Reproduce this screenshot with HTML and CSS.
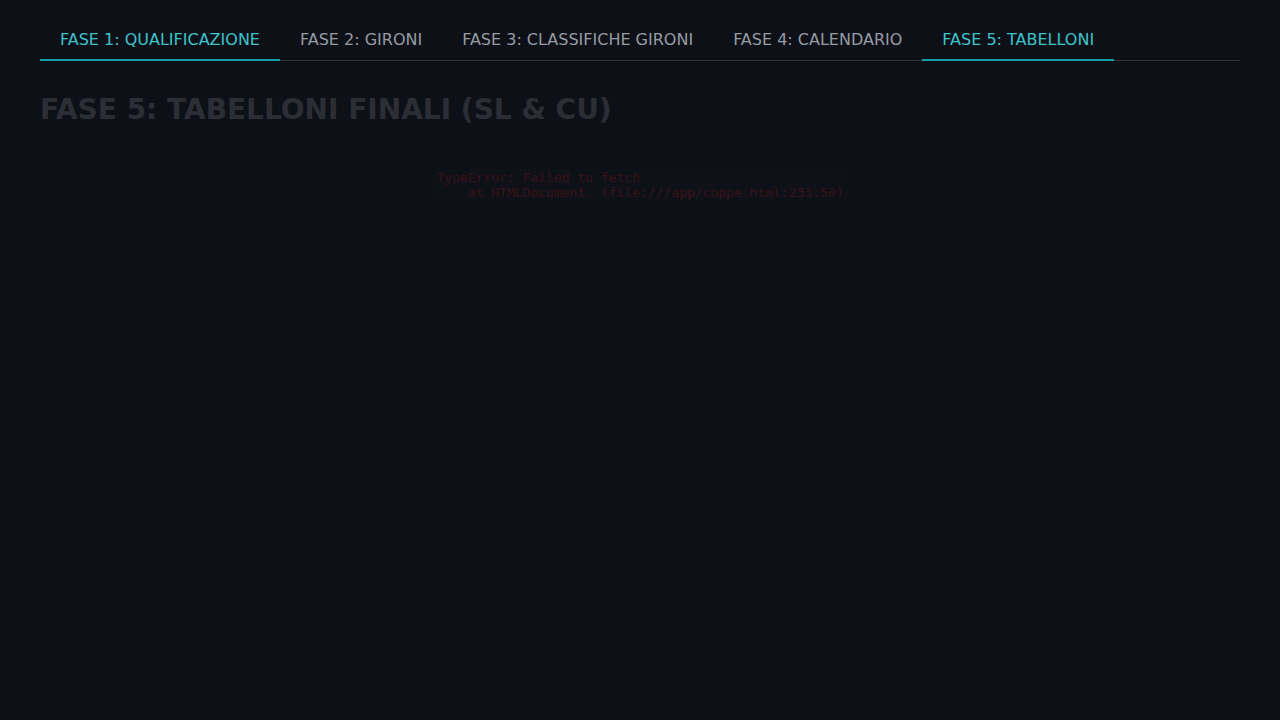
FILE: index.html
```html
<!DOCTYPE html>
<html lang="it">
<head>
<meta charset="utf-8">
<title>Coppe</title>
<link rel="stylesheet" href="styles.css">
</head>
<body>
<nav class="tabs">
  <div class="tab active">FASE 1: QUALIFICAZIONE</div>
  <div class="tab">FASE 2: GIRONI</div>
  <div class="tab">FASE 3: CLASSIFICHE GIRONI</div>
  <div class="tab">FASE 4: CALENDARIO</div>
  <div class="tab active">FASE 5: TABELLONI</div>
</nav>
<main class="content">
  <h1 class="title">FASE 5: TABELLONI FINALI (SL &amp; CU)</h1>
  <div class="error-wrap">
<pre class="error">TypeError: Failed to fetch
    at HTMLDocument. (file:///app/coppe.html:233:50)</pre>
  </div>
</main>
</body>
</html>
```
FILE: styles.css
```css
html, body {
  margin: 0;
  background: #0d1117;
}
body {
  padding: 20px 40px;
  font-family: "DejaVu Sans", sans-serif;
  min-height: 720px;
  box-sizing: border-box;
}
.tabs {
  display: flex;
  border-bottom: 1px solid #30333a;
}
.tab {
  padding: 10px 20px;
  font-size: 16px;
  color: #979ba3;
  border-bottom: 2px solid transparent;
  margin-bottom: -1px;
}
.tab.active {
  color: #3ec3cc;
  border-bottom-color: #14a0a3;
}
.title {
  margin: 32px 0 0;
  font-size: 28px;
  font-weight: bold;
  color: #2b2e34;
}
.error-wrap {
  text-align: center;
  margin-top: 43px;
}
.error {
  display: inline-block;
  text-align: left;
  margin: 0;
  padding: 1px 4px;
  font-family: "DejaVu Sans Mono", monospace;
  font-size: 13px;
  line-height: 15px;
  color: #3a1118;
  background: #0e1218;
}
```
